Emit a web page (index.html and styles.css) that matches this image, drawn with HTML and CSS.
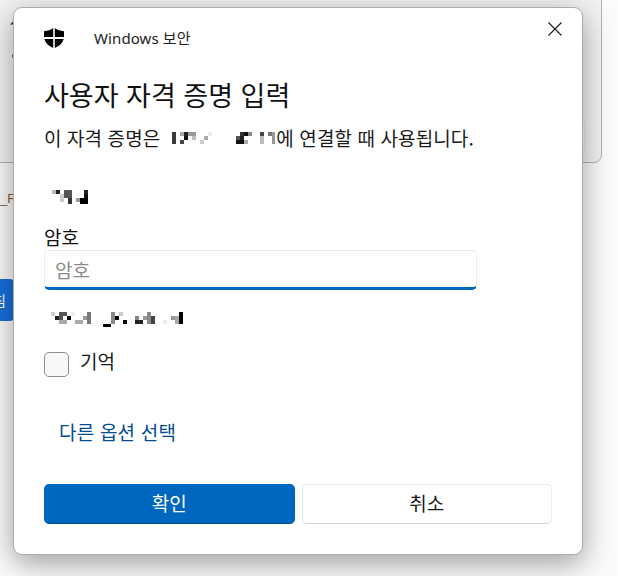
FILE: index.html
```html
<!DOCTYPE html>
<html lang="ko">
<head>
<meta charset="utf-8">
<title>Windows 보안</title>
<link rel="stylesheet" href="styles.css">
</head>
<body>
<div class="desktop">
  <div class="back-window">
    <span class="back-a">사</span>
    <span class="back-dot"></span>
    <span class="back-field"></span>
  </div>
  <span class="back-label">_R</span>
  <span class="back-btn">침</span>
  <main class="dialog">
    <button class="close" aria-label="닫기">
      <svg width="14" height="14" viewBox="0 0 14 14"><path d="M.5.5l13 13M13.500.5l-13 13" fill="none" stroke="#1a1a1a" stroke-width="1.1"/></svg>
    </button>
    <header class="head">
      <svg class="shield" width="20" height="20" viewBox="0 0 20 20"><path d="M9.200 0C7 1.800 3.600 3 0 3.200V9h9.200zM10.800 0V9H20V3.200C16.400 3 13 1.800 10.800 0zM.3 11C1.200 15 4.500 18 9.200 20V11zM10.800 11V20C15.500 18 18.800 15 19.700 11z" fill="#000"/></svg>
      <span class="app">Windows 보안</span>
    </header>
    <h1 class="title">사용자 자격 증명 입력</h1>
    <p class="desc">이 자격 증명은
      <svg class="mosaic m1" width="105" height="13" viewBox="0 0 105 13"><g fill="#3a3a3a"><rect x="1" y="0" width="4" height="12"/></g><rect x="9" y="0" width="4" height="4" fill="#aaa"/><rect x="13" y="0" width="4" height="4" fill="#222"/><rect x="17" y="0" width="8" height="4" fill="#999"/><rect x="13" y="4" width="4" height="4" fill="#111"/><rect x="9" y="8" width="4" height="4" fill="#444"/><rect x="21" y="4" width="4" height="4" fill="#bbb"/><rect x="37" y="0" width="4" height="4" fill="#eee"/><rect x="33" y="4" width="4" height="4" fill="#aaa"/><rect x="29" y="8" width="4" height="4" fill="#ccc"/><rect x="65" y="4" width="4" height="4" fill="#555"/><rect x="69" y="0" width="4" height="4" fill="#333"/><rect x="73" y="0" width="4" height="4" fill="#111"/><rect x="77" y="0" width="4" height="4" fill="#888"/><rect x="65" y="8" width="8" height="4" fill="#111"/><rect x="69" y="4" width="4" height="4" fill="#222"/><rect x="73" y="8" width="4" height="4" fill="#aaa"/><rect x="89" y="0" width="4" height="4" fill="#444"/><rect x="89" y="4" width="4" height="8" fill="#bbb"/><rect x="97" y="0" width="4" height="4" fill="#777"/><rect x="101" y="0" width="3" height="12" fill="#999"/></svg>에 연결할 때 사용됩니다.
    </p>
    <svg class="mosaic m2" width="38" height="15" viewBox="0 0 38 15"><rect x="0" y="0" width="4" height="4" fill="#bbb"/><rect x="4" y="0" width="4" height="4" fill="#222"/><rect x="8" y="4" width="4" height="8" fill="#ccc"/><rect x="12" y="0" width="8" height="8" fill="#555"/><rect x="16" y="8" width="4" height="6" fill="#333"/><rect x="24" y="8" width="4" height="4" fill="#999"/><rect x="32" y="0" width="4" height="4" fill="#222"/><rect x="28" y="8" width="8" height="6" fill="#000"/><rect x="32" y="4" width="4" height="4" fill="#111"/></svg>
    <label class="label" for="pw">암호</label>
    <input class="input" id="pw" type="password" placeholder="암호">
    <svg class="mosaic m3" width="134" height="16" viewBox="0 0 134 16"><rect x="0" y="1" width="4" height="4" fill="#ccc"/><rect x="4" y="5" width="4" height="4" fill="#222"/><rect x="8" y="1" width="4" height="8" fill="#555"/><rect x="12" y="1" width="4" height="4" fill="#555"/><rect x="8" y="9" width="8" height="4" fill="#aaa"/><rect x="16" y="5" width="4" height="4" fill="#000"/><rect x="20" y="1" width="4" height="4" fill="#eee"/><rect x="24" y="9" width="8" height="4" fill="#aaa"/><rect x="32" y="5" width="4" height="4" fill="#999"/><rect x="36" y="1" width="4" height="12" fill="#777"/><rect x="52" y="13" width="8" height="4" fill="#000"/><rect x="60" y="1" width="4" height="12" fill="#888"/><rect x="64" y="5" width="4" height="4" fill="#000"/><rect x="68" y="1" width="4" height="4" fill="#ccc"/><rect x="72" y="9" width="4" height="4" fill="#000"/><rect x="84" y="5" width="4" height="4" fill="#888"/><rect x="84" y="9" width="8" height="4" fill="#222"/><rect x="92" y="5" width="4" height="4" fill="#999"/><rect x="96" y="1" width="4" height="12" fill="#888"/><rect x="100" y="5" width="4" height="8" fill="#444"/><rect x="112" y="9" width="4" height="4" fill="#eee"/><rect x="120" y="5" width="4" height="4" fill="#999"/><rect x="124" y="5" width="4" height="8" fill="#aaa"/><rect x="128" y="1" width="4" height="12" fill="#000"/></svg>
    <div class="remember">
      <span class="check"></span>
      <span class="check-text">기억</span>
    </div>
    <a class="more" href="#">다른 옵션 선택</a>
    <div class="actions">
      <button class="btn primary">확인</button>
      <button class="btn">취소</button>
    </div>
  </main>
</div>
</body>
</html>
```

FILE: styles.css
```css
* { box-sizing: border-box; }
html, body { margin: 0; height: 100%; }
body {
  background: #fbfbfb;
  font-family: "Noto Sans CJK KR", "Noto Sans", sans-serif;
  color: #1a1a1a;
  overflow: hidden;
}
.desktop {
  position: relative;
  width: 618px;
  height: 576px;
  overflow: hidden;
  background: #fbfbfb;
}
.back-window {
  position: absolute;
  left: -20px;
  top: -20px;
  width: 622px;
  height: 183px;
  background: #f3f3f3;
  border: 1px solid #b4b4b4;
  border-radius: 8px;
}
.back-a {
  position: absolute;
  left: 29px;
  top: 29px;
  font-size: 14px;
}
.back-dot {
  position: absolute;
  left: 31px;
  top: 73px;
  width: 4px;
  height: 4px;
  border-radius: 50%;
  background: #8a3a3a;
}
.back-field {
  position: absolute;
  left: 590px;
  top: 137px;
  width: 14px;
  height: 36px;
  background: #f8f8f8;
  border: 1px solid #e8e8e8;
  border-radius: 4px;
}
.back-label {
  position: absolute;
  left: 0;
  top: 191px;
  font: 13px "Liberation Sans", sans-serif;
  color: #8a5a3a;
}
.back-btn {
  position: absolute;
  left: -8px;
  top: 279px;
  width: 22px;
  height: 42px;
  padding-left: 1px;
  border-radius: 4px;
  background: #1670dc;
  color: #fff;
  font-size: 14px;
  line-height: 42px;
}
.dialog {
  position: absolute;
  left: 13px;
  top: 7px;
  width: 570px;
  height: 548px;
  padding: 0 30px;
  background: #fff;
  border: 1px solid #adadad;
  border-radius: 9px;
  box-shadow: 0 8px 30px rgba(0, 0, 0, .38);
  display: flex;
  flex-direction: column;
  align-items: flex-start;
}
.close {
  position: absolute;
  right: 20px;
  top: 14px;
  width: 14px;
  height: 14px;
  padding: 0;
  border: 0;
  background: none;
  line-height: 0;
}
.head {
  display: flex;
  align-items: center;
  height: 20px;
  margin-top: 20px;
}
.shield { flex: none; }
.app {
  margin-left: 30px;
  font-size: 15px;
  line-height: 20px;
  letter-spacing: .1px;
  font-family: "Noto Sans", "Noto Sans CJK KR", sans-serif;
  color: #222;
}
.title {
  margin: 27px 0 0;
  font-size: 27px;
  font-weight: 400;
  line-height: 40px;
  color: #111;
}
.desc {
  margin: 10px 0 0;
  font-size: 19px;
  letter-spacing: .1px;
  line-height: 26px;
  white-space: nowrap;
  display: flex;
  align-items: center;
}
.mosaic { display: block; flex: none; }
.m1 { margin: 0 0 0 11px; }
.m2 { margin: 39px 0 0 8px; }
.label {
  margin-top: 20px;
  font-size: 19px;
  line-height: 24px;
  color: #111;
}
.input {
  width: 433px;
  height: 40px;
  margin-top: 1px;
  padding: 0 10px;
  background: #fff;
  border: 1px solid #ececec;
  border-bottom: 3px solid #0067c0;
  border-radius: 5px;
  font: 19px "Noto Sans CJK KR", sans-serif;
  outline: 0;
}
.input::placeholder { color: #8c8c8c; opacity: 1; }
.m3 { margin: 21px 0 0 7px; }
.remember {
  display: flex;
  align-items: center;
  gap: 11px;
  margin-top: 25px;
}
.check {
  width: 25px;
  height: 25px;
  background: #f8f8f8;
  border: 1px solid #8f8f8f;
  border-radius: 5px;
}
.check-text {
  font-size: 19px;
  line-height: 25px;
  position: relative;
  top: -4px;
}
.more {
  margin: 42px 0 0 15px;
  font-size: 19px;
  letter-spacing: .2px;
  line-height: 26px;
  color: #034c94;
  text-decoration: none;
}
.actions {
  display: flex;
  gap: 7px;
  width: 100%;
  margin-top: 39px;
}
.btn {
  flex: 1;
  height: 40px;
  padding: 0 0 3px;
  background: #fff;
  border: 1px solid #ececec;
  border-bottom-color: #d4d4d4;
  border-radius: 5px;
  font: 19px "Noto Sans CJK KR", sans-serif;
  color: #1a1a1a;
}
.primary {
  background: #0067c0;
  border-color: #0067c0;
  border-bottom-color: #004a8c;
  color: #fff;
}
```
